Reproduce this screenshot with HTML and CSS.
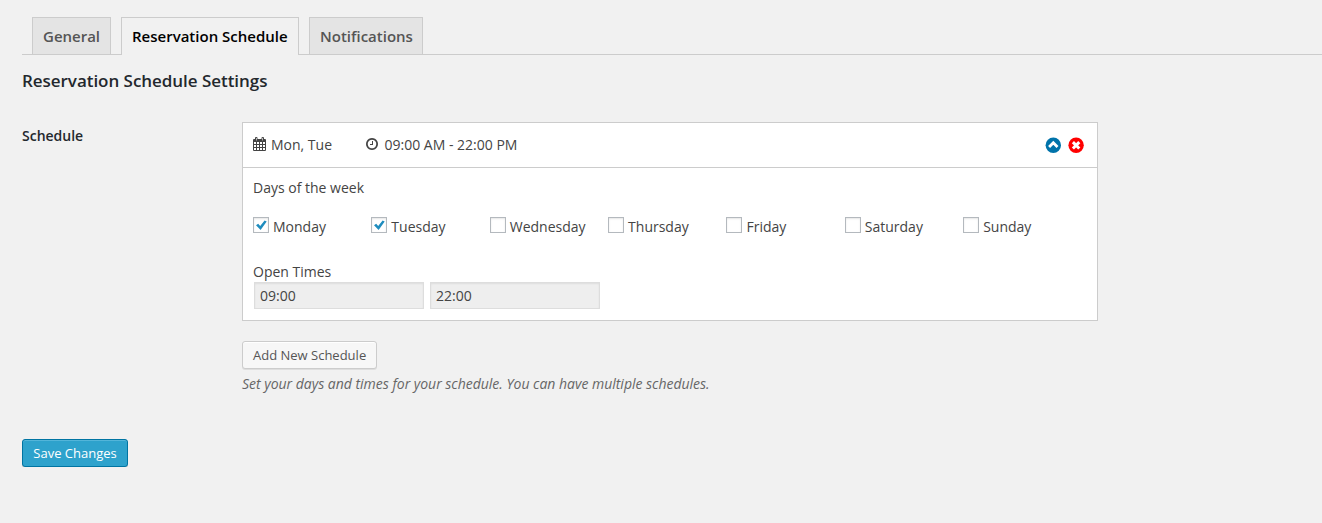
FILE: index.html
```html
<!DOCTYPE html>
<html lang="en">
<head>
<meta charset="utf-8">
<title>Reservation Schedule Settings</title>
<link rel="stylesheet" href="styles.css">
</head>
<body>
<main class="wrap">
  <nav class="tabs">
    <a class="tab">General</a>
    <a class="tab tab-active">Reservation Schedule</a>
    <a class="tab">Notifications</a>
  </nav>
  <h3 class="title">Reservation Schedule Settings</h3>
  <section class="row">
    <div class="row-label">Schedule</div>
    <div class="row-field">
      <div class="schedule">
        <header class="schedule-head">
          <svg class="icon-calendar" viewBox="0 0 13 14"><path fill-rule="evenodd" d="M1 2h1V1q0-1 1-1h.5q1 0 1 1v1h4V1q0-1 1-1h.5q1 0 1 1v1h1q1 0 1 1v10q0 1-1 1H1q-1 0-1-1V3q0-1 1-1zM1 5v2h2V5zm3 0v2h2V5zm3 0v2h2V5zm3 0v2h2V5zM1 8v2h2V8zm3 0v2h2V8zm3 0v2h2V8zm3 0v2h2V8zM1 11v2h2v-2zm3 0v2h2v-2zm3 0v2h2v-2zm3 0v2h2v-2zM3 1v2.500h.6V1zm6.400 0v2.500h.6V1z"/></svg>
          <span class="head-days">Mon, Tue</span>
          <svg class="icon-clock" viewBox="128 128 1536 1536"><path d="M1024 544v448q0 14-9 23t-23 9h-320q-14 0-23-9t-9-23v-64q0-14 9-23t23-9h224v-352q0-14 9-23t23-9h64q14 0 23 9t9 23zm416 352q0-148-73-273t-198-198-273-73-273 73-198 198-73 273 73 273 198 198 273 73 273-73 198-198 73-273zm224 0q0 209-103 385.500t-279.500 279.500-385.500 103-385.500-103-279.500-279.500-103-385.500 103-385.500 279.500-279.500 385.500-103 385.500 103 279.500 279.500 103 385.500z"/></svg>
          <span class="head-times">09:00 AM - 22:00 PM</span>
          <span class="actions">
            <svg class="icon-action" viewBox="0 0 16 16"><circle cx="8.300" cy="8.300" r="7.700" fill="#0073aa"/><path d="M4.100 10 8.300 5.800l4.200 4.200" fill="none" stroke="#fff" stroke-width="2.800"/></svg>
            <svg class="icon-action" viewBox="0 0 16 16"><circle cx="8.100" cy="8.300" r="7.700" fill="#f00"/><path d="m4.900 5.100 6.400 6.400m0-6.400-6.400 6.400" fill="none" stroke="#fff" stroke-width="3"/></svg>
          </span>
        </header>
        <div class="schedule-body">
          <div class="caption">Days of the week</div>
          <div class="days">
            <label class="day"><span class="box"><svg class="check" viewBox="0 0 14 14"><path d="M2 7.300 4.200 5.700l2 2.300L10.600 2.500l2.100 1.100-6.100 8.300z"/></svg></span>Monday</label>
            <label class="day"><span class="box"><svg class="check" viewBox="0 0 14 14"><path d="M2 7.300 4.200 5.700l2 2.300L10.600 2.500l2.100 1.100-6.100 8.300z"/></svg></span>Tuesday</label>
            <label class="day"><span class="box"></span>Wednesday</label>
            <label class="day"><span class="box"></span>Thursday</label>
            <label class="day"><span class="box"></span>Friday</label>
            <label class="day"><span class="box"></span>Saturday</label>
            <label class="day"><span class="box"></span>Sunday</label>
          </div>
          <div class="caption">Open Times</div>
          <div class="times">
            <input class="time" type="text" value="09:00" readonly>
            <input class="time" type="text" value="22:00" readonly>
          </div>
        </div>
      </div>
      <button class="button">Add New Schedule</button>
      <p class="description">Set your days and times for your schedule. You can have multiple schedules.</p>
    </div>
  </section>
  <button class="button button-primary">Save Changes</button>
</main>
</body>
</html>
```

FILE: styles.css
```css
* { box-sizing: border-box; }
body {
  margin: 0;
  background: #f1f1f1;
  color: #444;
  font: 14px/20px "Open Sans", sans-serif;
}
.wrap { padding: 17px 0 0 22px; }
.tabs {
  display: grid;
  grid-template-columns: 79px 178px 114px;
  column-gap: 10px;
  height: 38px;
  padding-left: 10px;
  border-bottom: 1px solid #ccc;
}
.tab {
  height: 37px;
  padding: 6px 0 0 10px;
  border: 1px solid #ccc;
  border-bottom: 0;
  background: #e4e4e4;
  color: #555;
  font-size: 15px;
  font-weight: 600;
  line-height: 24px;
  white-space: nowrap;
}
.tab-active { height: 38px; background: #f1f1f1; color: #000; }
.title {
  margin: 15px 0 0;
  color: #23282d;
  font-size: 17px;
  font-weight: 600;
  line-height: 22px;
  letter-spacing: -.04px;
}
.row { display: flex; margin-top: 30px; }
.row-label {
  width: 220px;
  padding-top: 4px;
  color: #23282d;
  font-weight: 600;
}
.row-field { width: 856px; }
.schedule { height: 199px; border: 1px solid #ccc; background: #fff; }
.schedule-head {
  display: flex;
  align-items: center;
  height: 45px;
  padding: 0 13px 0 10px;
  border-bottom: 1px solid #ccc;
}
.icon-calendar { width: 13px; height: 14px; margin: 0 5px 2px 0; fill: #444; }
.head-days { width: 94.5px; }
.icon-clock { width: 12px; height: 12px; margin: 0 7px 2px 0; fill: #444; }
.actions { display: flex; gap: 7px; margin-left: auto; }
.icon-action { width: 16px; height: 16px; }
.schedule-body { padding: 10px; }
.days {
  display: grid;
  grid-template-columns: repeat(7, 118.36px);
  margin: 19px 0 25px;
}
.day { display: flex; gap: 4px; white-space: nowrap; }
.box {
  width: 16px;
  height: 16px;
  border: 1px solid #b4b9be;
  background: #fff;
  box-shadow: inset 0 1px 2px rgba(0, 0, 0, .1);
}
.check { display: block; width: 14px; height: 14px; fill: #1e8cbe; }
.times { display: flex; gap: 6px; padding-left: 1px; }
.time {
  width: 170px;
  height: 27px;
  padding: 3px 5px;
  border: 1px solid #ddd;
  border-radius: 0;
  background: #eee;
  box-shadow: inset 0 1px 2px rgba(0, 0, 0, .07);
  color: #444;
  font: 14px "Open Sans", sans-serif;
}
.button {
  display: block;
  height: 28px;
  margin-top: 20px;
  padding: 0 10px 1px;
  border: 1px solid #ccc;
  border-radius: 3px;
  background: #f7f7f7;
  box-shadow: inset 0 1px 0 #fff, 0 1px 0 rgba(0, 0, 0, .08);
  color: #555;
  font: 13px/26px "Open Sans", sans-serif;
  white-space: nowrap;
}
.description { margin: 5px 0 0; color: #666; font-style: italic; letter-spacing: -.01px; }
.button-primary {
  width: 106px;
  margin-top: 45px;
  border-color: #0074a2;
  background: #2ea2cc;
  box-shadow: inset 0 1px 0 rgba(120, 200, 230, .5), 0 1px 0 rgba(0, 0, 0, .15);
  color: #fff;
}
```
